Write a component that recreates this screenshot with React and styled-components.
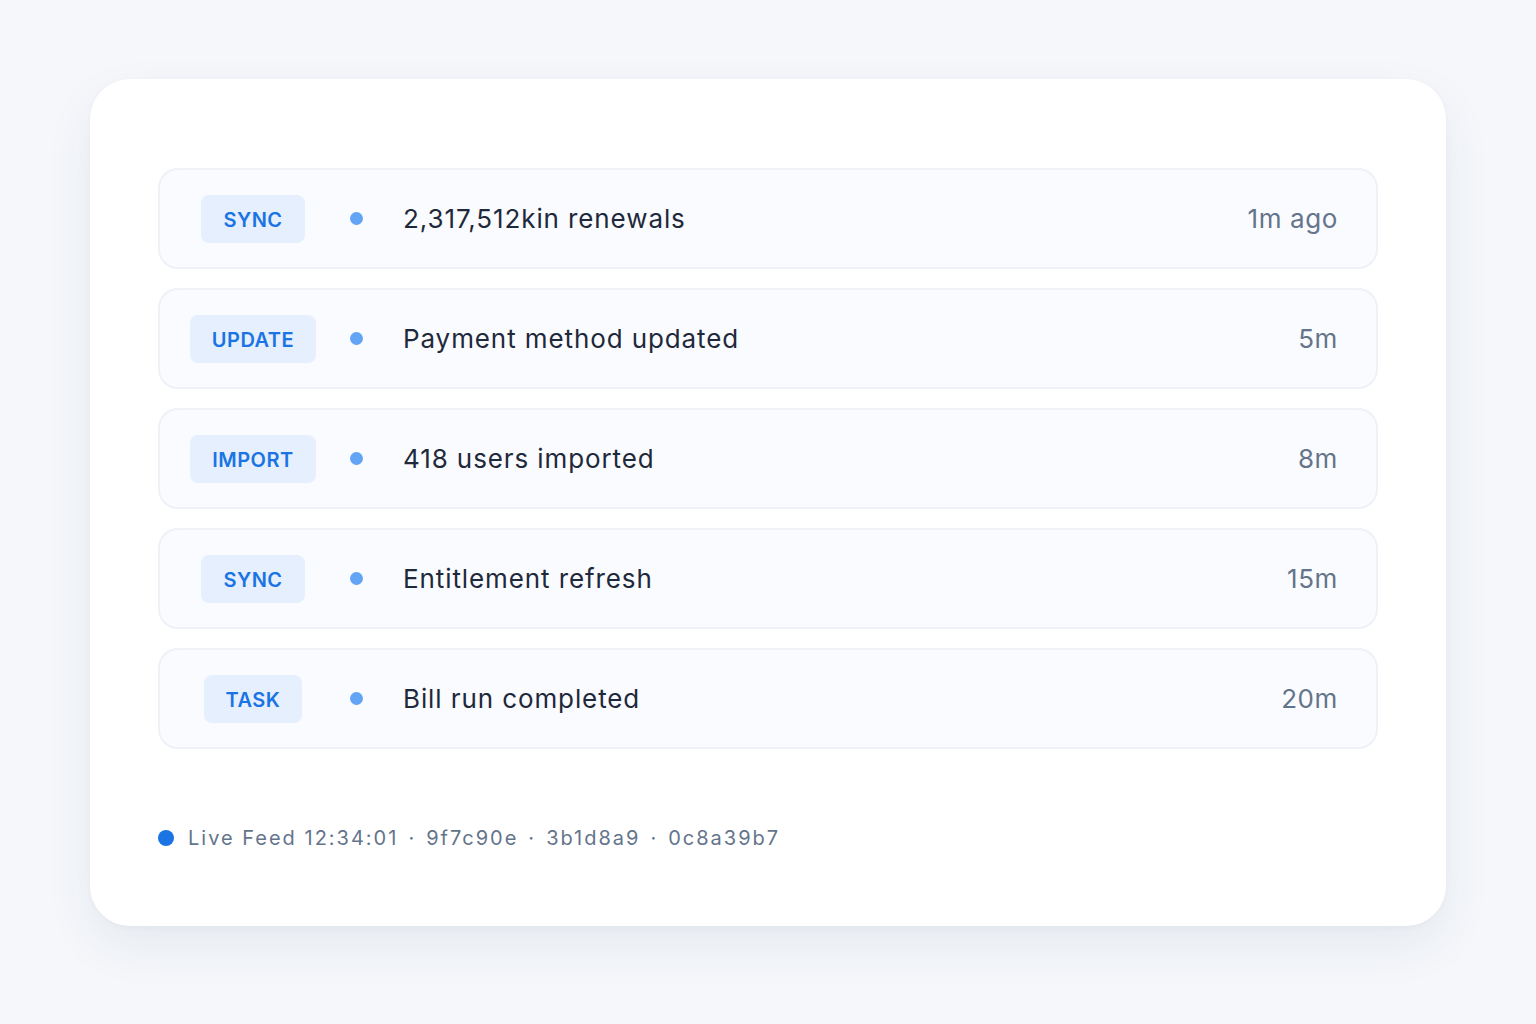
import React from "react";
import styled, { createGlobalStyle } from "styled-components";

const Global = createGlobalStyle`
  html, body { margin: 0; background: #f5f7fb; font-family: Inter, "Noto Sans", sans-serif; }
`;
const Page = styled.div`
  width: 1536px; height: 1024px; box-sizing: border-box;
  padding: 79px 90px 0 90px;
`;
const Card = styled.div`
  width: 1356px; height: 847px; box-sizing: border-box;
  background: #fff; border-radius: 40px;
  box-shadow: 0 20px 50px rgba(30, 50, 90, 0.07), 0 2px 6px rgba(30,50,90,0.03);
  padding: 89px 68px 0 68px;
  display: flex; flex-direction: column;
`;
const List = styled.div`display: flex; flex-direction: column; gap: 19px;`;
const Row = styled.div`
  height: 101px; box-sizing: border-box;
  border: 2px solid #eef1f6; border-radius: 20px; background: #fafbfe;
  display: flex; align-items: center; padding-right: 38px;
`;
const BadgeCell = styled.div`width: 186px; display: flex; justify-content: center; margin-right: 4px;`;
const Badge = styled.span`
  height: 48px; padding: 0 22px; border-radius: 8px;
  background: #e5effd; color: #1b74e4;
  font-size: 20px; font-weight: 600; letter-spacing: 0.5px;
  display: flex; align-items: center; padding-top: 2px; box-sizing: border-box;
`;
const Dot = styled.span`
  width: 13px; height: 13px; border-radius: 50%; background: ${p => p.$c || "#63a4f4"};
  flex: none;
`;
const Text = styled.span`
  margin-left: 40px; flex: 1; font-size: 26px; color: #1e293b; letter-spacing: 0.9px;
`;
const Time = styled.span`font-size: 26px; color: #64748b; letter-spacing: 0.6px;`;
const Footer = styled.div`
  margin-top: 77px; display: flex; align-items: center; gap: 14px;
  font-size: 20px; color: #64748b; letter-spacing: 2px;
`;
const FDot = styled(Dot)`width: 16px; height: 16px; background: #1b74e4;`;
const Sep = styled.span`margin: 0 10px;`;

const rows = [
  ["SYNC", "2,317,512kin renewals", "1m ago"],
  ["UPDATE", "Payment method updated", "5m"],
  ["IMPORT", "418 users imported", "8m"],
  ["SYNC", "Entitlement refresh", "15m"],
  ["TASK", "Bill run completed", "20m"],
];

export default function App() {
  return (
    <Page>
      <Global />
      <Card>
        <List>
          {rows.map(([b, t, m], i) => (
            <Row key={i}>
              <BadgeCell><Badge>{b}</Badge></BadgeCell>
              <Dot />
              <Text>{t}</Text>
              <Time>{m}</Time>
            </Row>
          ))}
        </List>
        <Footer>
          <FDot />
          <span>Live Feed 12:34:01<Sep>·</Sep>9f7c90e<Sep>·</Sep>3b1d8a9<Sep>·</Sep>0c8a39b7</span>
        </Footer>
      </Card>
    </Page>
  );
}
